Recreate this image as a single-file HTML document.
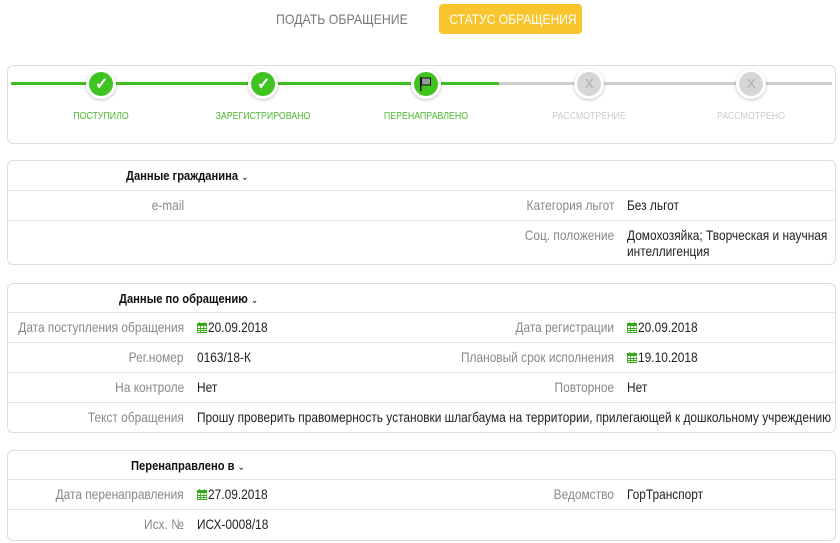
<!DOCTYPE html>
<html><head><meta charset="utf-8"><style>
*{margin:0;padding:0;box-sizing:border-box}
body{width:840px;height:543px;background:#fff;position:relative;overflow:hidden;font-family:"Liberation Sans",sans-serif;font-size:14px;color:#222}
.a{position:absolute;white-space:nowrap}
.box{position:absolute;left:7px;width:829px;border:1px solid #ddd;border-radius:6px;background:#fff}
.hl{position:absolute;left:0;right:0;height:1px;background:#e4e4e4}
.lab{position:absolute;color:#888;text-align:right;white-space:nowrap;transform:scaleX(.85);transform-origin:right center}
.val{position:absolute;color:#222;white-space:nowrap;transform:scaleX(.85);transform-origin:left center}
.ttl{position:absolute;font-weight:bold;color:#111;white-space:nowrap;font-size:13px;transform:scaleX(.86);transform-origin:left center}
.c{position:absolute;top:69px;width:30px;height:30px;border-radius:50%;background:#fff;box-shadow:0 1px 3px rgba(0,0,0,.25)}
.c i{position:absolute;left:3px;top:3px;width:24px;height:24px;border-radius:50%;display:block}
.sl{position:absolute;top:111px;font-size:10px;text-align:center;width:160px;transform:scaleX(.88)}
.cal{display:inline-block;width:12px;height:11px;vertical-align:-1px;margin-right:1px}
</style></head><body>
<div class="a" style="left:276px;top:11px;font-size:14px;color:#777;transform:scaleX(.88);transform-origin:left center">ПОДАТЬ ОБРАЩЕНИЕ</div>
<div class="a" style="left:439px;top:4px;width:143px;height:30px;background:#f9c52e;border-radius:4px;color:#fff;font-size:14px;line-height:30px;text-align:center"><span style="display:inline-block;transform:scaleX(.86)">СТАТУС ОБРАЩЕНИЯ</span></div>

<div class="box" style="top:65px;height:79px"></div>
<div class="a" style="left:11px;top:82px;width:488px;height:3px;background:#3fbf1f"></div>
<div class="a" style="left:499px;top:82px;width:333px;height:3px;background:#cfcfcf"></div>
<div class="c" style="left:86px"><i style="background:#3fc41f"></i><span class="a" style="left:9px;top:5px;color:#fff;font-size:16px;font-weight:bold">✓</span></div>
<div class="c" style="left:248px"><i style="background:#3fc41f"></i><span class="a" style="left:9px;top:5px;color:#fff;font-size:16px;font-weight:bold">✓</span></div>
<div class="c" style="left:411px"><i style="background:#3fc41f"></i><svg class="a" style="left:8px;top:7px" width="14" height="16" viewBox="0 0 14 16"><rect x="1" y="1" width="1.5" height="14" fill="#111"/><path d="M2.5 2h9v7h-9z" fill="#999" stroke="#111" stroke-width="1"/></svg></div>
<div class="c" style="left:574px"><i style="background:#d6d6d6"></i><span class="a" style="left:11px;top:7px;color:#aaa;font-size:13px">X</span></div>
<div class="c" style="left:736px"><i style="background:#d6d6d6"></i><span class="a" style="left:11px;top:7px;color:#aaa;font-size:13px">X</span></div>
<div class="sl" style="left:21px;color:#4cb82e">ПОСТУПИЛО</div>
<div class="sl" style="left:183px;color:#4cb82e">ЗАРЕГИСТРИРОВАНО</div>
<div class="sl" style="left:346px;color:#4cb82e">ПЕРЕНАПРАВЛЕНО</div>
<div class="sl" style="left:509px;color:#ccc">РАССМОТРЕНИЕ</div>
<div class="sl" style="left:671px;color:#ccc">РАССМОТРЕНО</div>

<div class="box" style="top:160px;height:105px">
<div class="hl" style="top:29px"></div><div class="hl" style="top:59px"></div>
</div>
<div class="ttl" style="left:126px;top:168px">Данные гражданина <span style="font-weight:normal;font-size:10px">⌄</span></div>
<div class="lab" style="right:656px;top:197px">e-mail</div>
<div class="lab" style="right:226px;top:197px">Категория льгот</div><div class="val" style="left:627px;top:197px">Без льгот</div>
<div class="lab" style="right:226px;top:227px">Соц. положение</div><div class="val" style="left:627px;top:227px;line-height:16px">Домохозяйка; Творческая и научная<br>интеллигенция</div>

<div class="box" style="top:283px;height:150px">
<div class="hl" style="top:28px"></div><div class="hl" style="top:58px"></div><div class="hl" style="top:88px"></div><div class="hl" style="top:118px"></div>
</div>
<div class="ttl" style="left:119px;top:291px">Данные по обращению <span style="font-weight:normal;font-size:10px">⌄</span></div>
<div class="lab" style="right:656px;top:319px">Дата поступления обращения</div><div class="val" style="left:197px;top:319px"><svg class="cal" viewBox="0 0 12 11"><rect x="0.5" y="1.5" width="11" height="9" fill="none" stroke="#3aa81c"/><rect x="0.5" y="1.5" width="11" height="2.5" fill="#3aa81c"/><path d="M3 0v2M9 0v2M0 6.5h12M0 8.5h12M4 4v7M8 4v7" stroke="#3aa81c"/></svg>20.09.2018</div>
<div class="lab" style="right:226px;top:319px">Дата регистрации</div><div class="val" style="left:627px;top:319px"><svg class="cal" viewBox="0 0 12 11"><rect x="0.5" y="1.5" width="11" height="9" fill="none" stroke="#3aa81c"/><rect x="0.5" y="1.5" width="11" height="2.5" fill="#3aa81c"/><path d="M3 0v2M9 0v2M0 6.5h12M0 8.5h12M4 4v7M8 4v7" stroke="#3aa81c"/></svg>20.09.2018</div>
<div class="lab" style="right:656px;top:349px">Рег.номер</div><div class="val" style="left:197px;top:349px">0163/18-К</div>
<div class="lab" style="right:226px;top:349px">Плановый срок исполнения</div><div class="val" style="left:627px;top:349px"><svg class="cal" viewBox="0 0 12 11"><rect x="0.5" y="1.5" width="11" height="9" fill="none" stroke="#3aa81c"/><rect x="0.5" y="1.5" width="11" height="2.5" fill="#3aa81c"/><path d="M3 0v2M9 0v2M0 6.5h12M0 8.5h12M4 4v7M8 4v7" stroke="#3aa81c"/></svg>19.10.2018</div>
<div class="lab" style="right:656px;top:379px">На контроле</div><div class="val" style="left:197px;top:379px">Нет</div>
<div class="lab" style="right:226px;top:379px">Повторное</div><div class="val" style="left:627px;top:379px">Нет</div>
<div class="lab" style="right:656px;top:409px">Текст обращения</div><div class="val" style="left:197px;top:409px">Прошу проверить правомерность установки шлагбаума на территории, прилегающей к дошкольному учреждению</div>

<div class="box" style="top:450px;height:91px">
<div class="hl" style="top:28px"></div><div class="hl" style="top:58px"></div>
</div>
<div class="ttl" style="left:131px;top:458px">Перенаправлено в <span style="font-weight:normal;font-size:10px">⌄</span></div>
<div class="lab" style="right:656px;top:486px">Дата перенаправления</div><div class="val" style="left:197px;top:486px"><svg class="cal" viewBox="0 0 12 11"><rect x="0.5" y="1.5" width="11" height="9" fill="none" stroke="#3aa81c"/><rect x="0.5" y="1.5" width="11" height="2.5" fill="#3aa81c"/><path d="M3 0v2M9 0v2M0 6.5h12M0 8.5h12M4 4v7M8 4v7" stroke="#3aa81c"/></svg>27.09.2018</div>
<div class="lab" style="right:226px;top:486px">Ведомство</div><div class="val" style="left:627px;top:486px">ГорТранспорт</div>
<div class="lab" style="right:656px;top:516px">Исх. №</div><div class="val" style="left:197px;top:516px">ИСХ-0008/18</div>
</body></html>
